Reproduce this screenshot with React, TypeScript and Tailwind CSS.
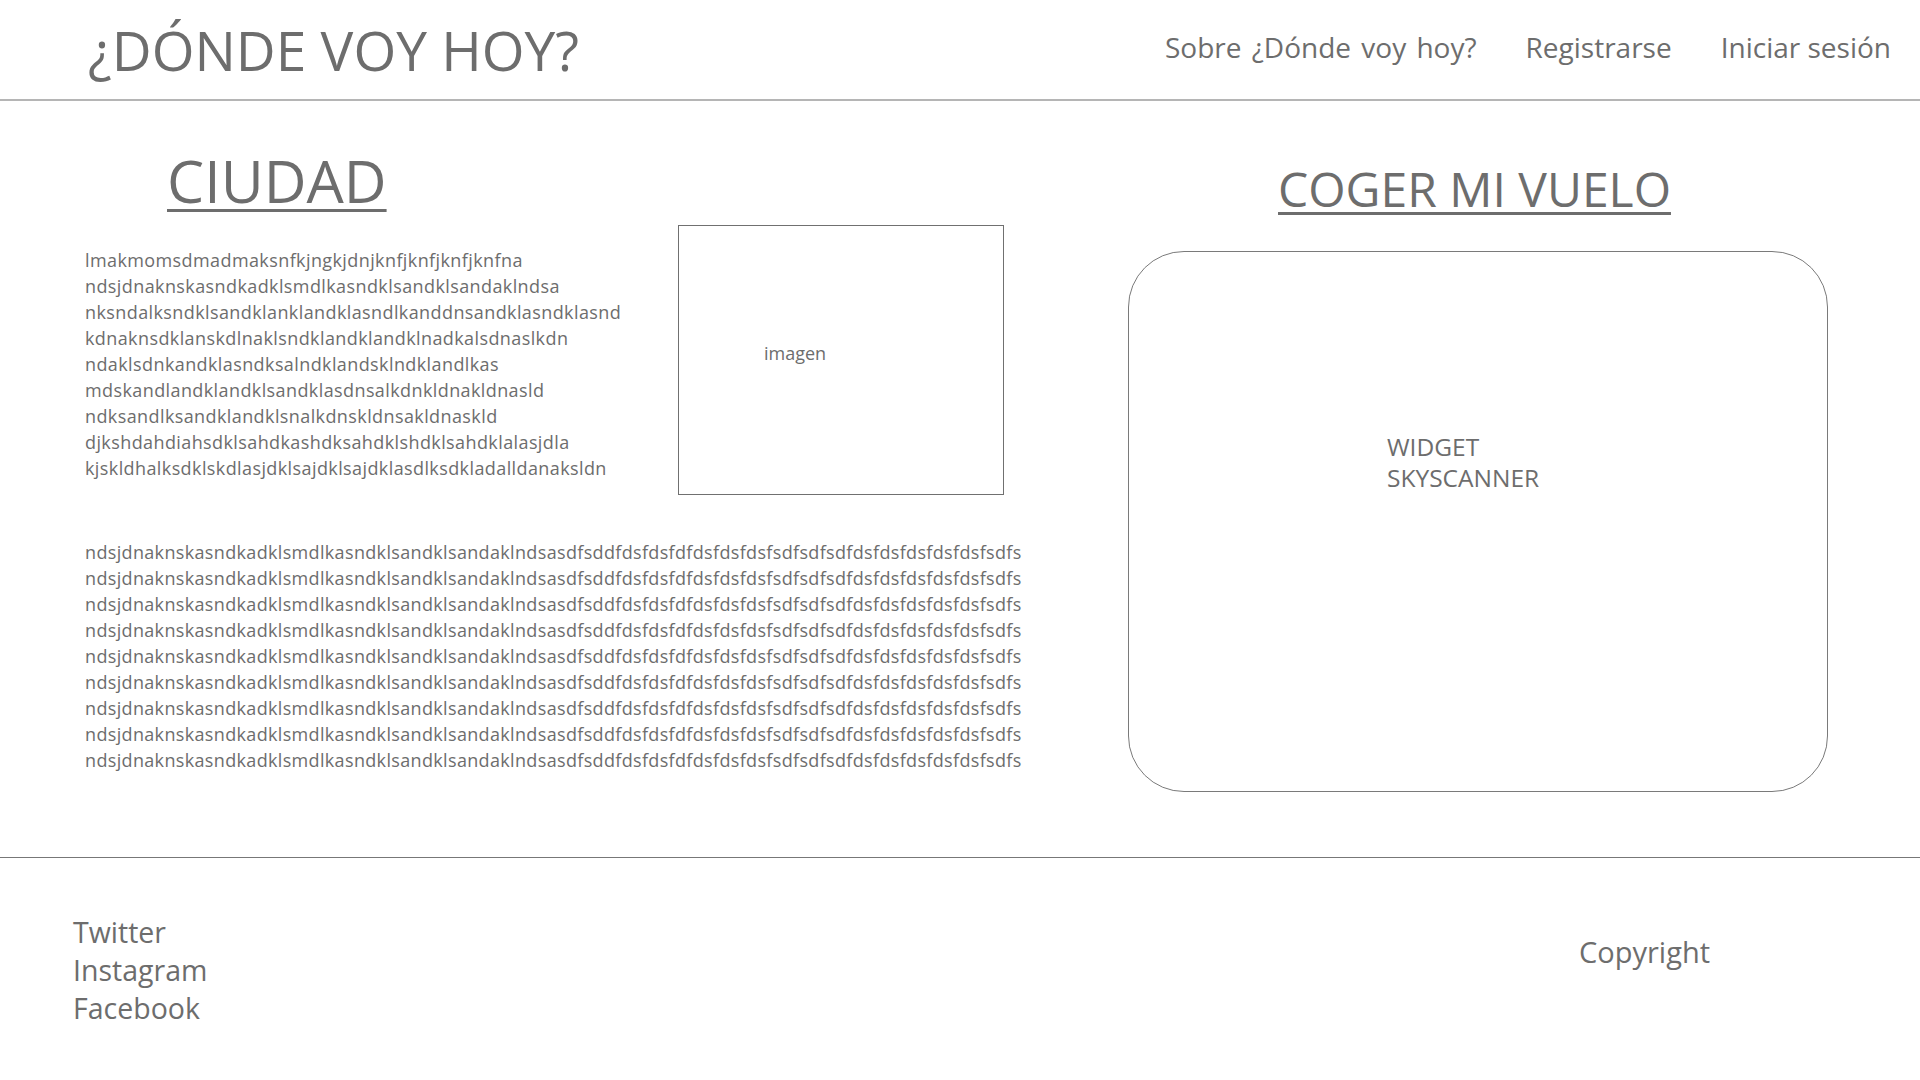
import React from "react";

const p1 = [
  "lmakmomsdmadmaksnfkjngkjdnjknfjknfjknfjknfna",
  "ndsjdnaknskasndkadklsmdlkasndklsandklsandaklndsa",
  "nksndalksndklsandklanklandklasndlkanddnsandklasndklasnd",
  "kdnaknsdklanskdlnaklsndklandklandklnadkalsdnaslkdn",
  "ndaklsdnkandklasndksalndklandsklndklandlkas",
  "mdskandlandklandklsandklasdnsalkdnkldnakldnasld",
  "ndksandlksandklandklsnalkdnskldnsakldnaskld",
  "djkshdahdiahsdklsahdkashdksahdklshdklsahdklalasjdla",
  "kjskldhalksdklskdlasjdklsajdklsajdklasdlksdkladalldanaksldn",
];

const p2Line =
  "ndsjdnaknskasndkadklsmdlkasndklsandklsandaklndsasdfsddfdsfdsfdfdsfdsfdsfsdfsdfsdfdsfdsfdsfdsfdsfsdfs";

export default function App() {
  return (
    <div className="min-h-[1080px] w-[1920px] bg-white font-['Open_Sans','Noto_Sans',sans-serif] text-[#6d6d6d]">
      {/* Header */}
      <header className="flex h-[101px] items-center justify-between border-b-2 border-[#b5b5b5] pl-[88px] pr-[29px]">
        <h1 className="text-[55px] leading-none font-normal">¿DÓNDE VOY HOY?</h1>
        <nav className="-mt-[6px] flex items-center gap-[49px] text-[28px] leading-none">
          <span className="[word-spacing:3px]">Sobre ¿Dónde voy hoy?</span>
          <span>Registrarse</span>
          <span>Iniciar sesión</span>
        </nav>
      </header>

      {/* Main */}
      <main className="flex h-[756px]">
        <section className="w-[1128px] pl-[85px] pt-[50px]">
          <h2 className="ml-[82px] text-[59px] leading-none underline decoration-[3px] underline-offset-[6px]">
            CIUDAD
          </h2>
          <div className="mt-[15px] flex items-start">
            <div className="mt-[22px] w-[593px] text-[18px] leading-[26px] tracking-[0.4px]">
              {p1.map((l, i) => (
                <div key={i} className="whitespace-nowrap">
                  {l}
                </div>
              ))}
            </div>
            <div className="h-[270px] w-[326px] border border-[#707070] pl-[85px] pt-[114px] text-[18px] leading-[26px]">
              imagen
            </div>
          </div>
          <div className="mt-[44px] text-[18px] leading-[26px] tracking-[0.34px]">
            {Array.from({ length: 9 }).map((_, i) => (
              <div key={i} className="whitespace-nowrap">
                {p2Line}
              </div>
            ))}
          </div>
        </section>

        <section className="w-[700px] pt-[64px]">
          <h2 className="pr-[7px] text-center text-[48px] leading-none underline decoration-[3px] underline-offset-[5px]">
            COGER MI VUELO
          </h2>
          <div className="mt-[38px] h-[541px] w-[700px] rounded-[56px] border border-[#7a7a7a] pl-[258px] pt-[179px] text-[24.5px] leading-[31px]">
            <div>WIDGET</div>
            <div>SKYSCANNER</div>
          </div>
        </section>
      </main>

      {/* Footer */}
      <footer className="flex border-t border-[#777777] pt-[55px] text-[28.5px] leading-[38px]">
        <div className="pl-[73px]">
          <div>Twitter</div>
          <div>Instagram</div>
          <div>Facebook</div>
        </div>
        <div className="ml-auto w-[341px] pt-[20px] text-[29px]">Copyright</div>
      </footer>
    </div>
  );
}
